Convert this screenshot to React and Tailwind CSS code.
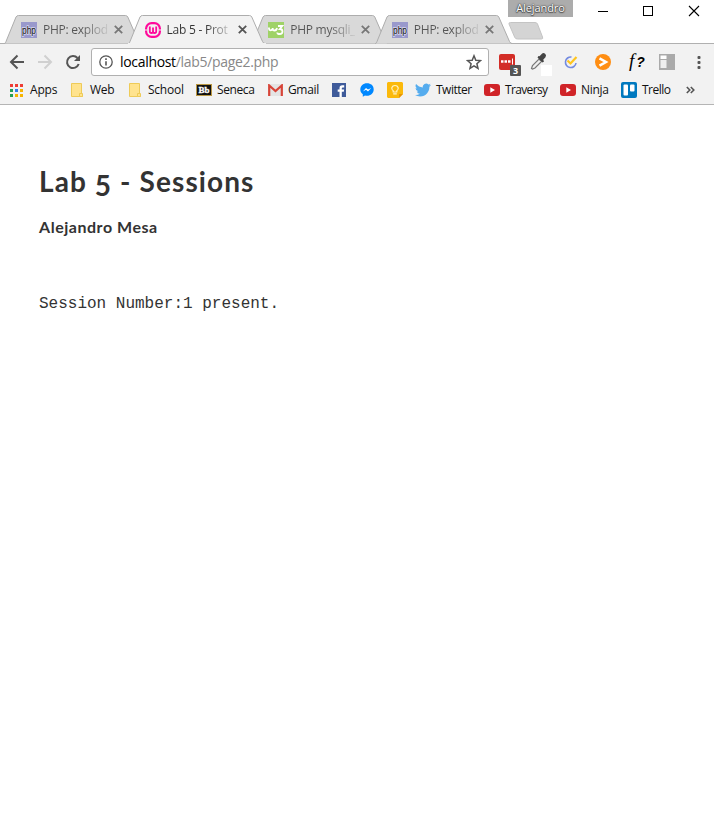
import React from 'react';

const UI = "font-['Open_Sans','Noto_Sans',sans-serif]";

function PhpIcon() {
  return (
    <svg width="16" height="16" className="block">
      <rect width="16" height="16" fill="#9999cc" />
      <text x="8" y="11.5" textAnchor="middle" fontFamily="Liberation Sans, sans-serif" fontSize="10" fill="#111" stroke="#d8d8ee" strokeWidth="1.6" paintOrder="stroke" textLength="14" lengthAdjust="spacingAndGlyphs">php</text>
    </svg>
  );
}

function WampIcon() {
  return (
    <svg width="16" height="16" viewBox="0 0 16 16" className="block" fill="none" stroke="#ff0a9b">
      <rect x="1.1" y="1.1" width="13.800" height="13.800" rx="5.500" strokeWidth="2.200" />
      <path d="M4.800 4.500v4.700q0 1.800 1.600 1.800T8 9.200V5.500M8 9.200q0 1.800 1.600 1.800t1.600-1.800V4.500" strokeWidth="1.800" />
      <path d="M0 8h2.500M13.500 8H16" stroke="#f2f2f2" strokeWidth="1" />
    </svg>
  );
}

function W3Icon() {
  return (
    <svg width="16" height="16" viewBox="0 0 16 16" className="block" fill="none" stroke="#fff" strokeWidth="1.8">
      <rect width="16" height="16" fill="#9fd267" stroke="none" />
      <path d="M1 5.500v1.300q0 1.500 1.500 1.500T4.700 7V6V7q0 1.500 1.900 1.500T9 6M10 4h4.200L11.800 7q2.700 0 2.700 2.500T11.800 12 9.500 10.500" />
    </svg>
  );
}

function Tab({ icon, label, active }) {
  const fill = active ? '#f2f2f2' : '#d9d9d9';
  return (
    <div className={'relative h-[29px] w-[138px] -mr-[14.400px] shrink-0 ' + (active ? 'z-10' : '')}>
      <svg width="138" height="29" className="absolute inset-0">
        <path d="M0 28.500C1.500 28.500 1.500 27.500 2 26.500L12 2Q12.800 .5 14.500 .5H121.500Q123 .5 123.800 2L134.500 26.500Q135.500 28.500 137 28.500" fill={fill} stroke="#adadad" />
        {active && <path d="M0 28.500H138" stroke="#f2f2f2" />}
      </svg>
      <div className="relative flex h-full items-center pl-[17px]">
        {icon}
        <span className={'ml-[6px] w-[65px] whitespace-nowrap text-[12px] leading-[16px] tracking-[-0.25px] bg-clip-text text-transparent bg-linear-to-r from-60% ' + (active ? 'from-[#333] to-[#33333320]' : 'from-[#555] to-[#55555520]')}>{label}</span>
        <svg width="9" height="9" className="ml-[6px]" stroke={active ? '#555' : '#777'} strokeWidth="1.800"><path d="M.8 .8l7.400 7.400M8.200 .8L.8 8.200" /></svg>
      </div>
    </div>
  );
}

function Folder() {
  return (
    <svg width="13" height="15" viewBox="0 0 13 15">
      <path d="M.5 .5h10v11h1v2H.5z" fill="#ffe38e" stroke="#eecb58" />
      <path d="M8.500 13.500v-3h3v3z" fill="#ffe38e" stroke="#eecb58" />
    </svg>
  );
}

function YouTube() {
  return (
    <svg width="16" height="12" viewBox="0 0 16 12">
      <rect width="16" height="12" rx="3" fill="#d02428" />
      <path d="M6.300 3.300v5.400L11 6z" fill="#fff" />
    </svg>
  );
}

function AppsIcon() {
  const colors = ['#ee3d35', '#ee3d35', '#ee3d35', '#249f58', '#2f80ed', '#f6b400', '#249f58', '#f6b400', '#f6b400'];
  return (
    <svg width="13" height="13">
      {colors.map((c, i) => <rect key={i} x={(i % 3) * 5} y={Math.floor(i / 3) * 5} width="3" height="3" fill={c} />)}
    </svg>
  );
}

function Bb() {
  return (
    <svg width="16" height="12">
      <rect x=".5" y=".5" width="15" height="11" fill="#111" stroke="#b99642" />
      <text x="8" y="9" textAnchor="middle" fontFamily="Liberation Serif, serif" fontWeight="bold" fontSize="9" fill="#fff" stroke="#fff" strokeWidth=".3">Bb</text>
    </svg>
  );
}

function Gmail() {
  return (
    <svg width="15" height="12" viewBox="0 0 15 12">
      <rect width="15" height="12" rx="1" fill="#e4e4e4" />
      <path d="M1.200 12V1.500L7.500 7l6.300-5.500V12" fill="none" stroke="#d84438" strokeWidth="2.200" />
    </svg>
  );
}

function Facebook() {
  return (
    <svg width="14" height="14" viewBox="0 0 14 14">
      <rect width="14" height="14" fill="#3f5b9a" />
      <path d="M7.500 14V8.700H5.700V6.500h1.800V5q0-2.800 2.800-2.800h1.900v2.200h-1.400q-1 0-1 .9v1.200h2.300l-.3 2.200h-2V14z" fill="#fff" />
    </svg>
  );
}

function Messenger() {
  return (
    <svg width="14" height="14" viewBox="0 0 14 14">
      <path d="M7 .3C3.200 .3 .3 3 .3 6.500c0 2 1 3.700 2.500 4.800v2.500L5 12.500c4.700 1.200 8.700-2 8.700-6S10.800 .3 7 .3" fill="#0088ff" />
      <path d="M2.800 8.400L6 5l2 1.600L11.200 5 8 8.400 6 6.800z" fill="#fff" />
    </svg>
  );
}

function Keep() {
  return (
    <svg width="16" height="16" viewBox="0 0 16 16">
      <path d="M1 0h14l1 1v11l-4 4H1l-1-1V1z" fill="#fbb90b" />
      <path d="M12 16v-4h4z" fill="#e69405" />
      <path d="M6.200 10V8.800C3.500 7 4.800 3.500 8 3.500s4.500 3.500 1.800 5.300V10zM6.200 11.800h3.600" fill="none" stroke="#fff3c7" strokeWidth="1.200" />
    </svg>
  );
}

function Twitter() {
  return (
    <svg width="16" height="16" viewBox="0 0 24 24" fill="#55acee">
      <path d="M23.950 4.570a10 10 0 0 1-2.820.77 4.960 4.960 0 0 0 2.160-2.720c-.95.550-2 .950-3.130 1.180a4.920 4.920 0 0 0-8.380 4.480C7.690 8.090 4.070 6.130 1.640 3.160a4.900 4.900 0 0 0 1.520 6.570 4.900 4.900 0 0 1-2.230-.61v.06a4.920 4.920 0 0 0 3.950 4.830 5 5 0 0 1-2.210.08 4.940 4.940 0 0 0 4.600 3.420A9.870 9.870 0 0 1 0 19.540a13.990 13.990 0 0 0 7.550 2.210c9.050 0 14-7.500 14-13.980v-.64a9.930 9.930 0 0 0 2.400-2.560z" />
    </svg>
  );
}

function Trello() {
  return (
    <svg width="16" height="16">
      <rect width="16" height="16" rx="2" fill="#0079bf" />
      <rect x="2.500" y="2.500" width="4.500" height="11" rx="1" fill="#fff" />
      <rect x="9" y="2.500" width="4.500" height="7" rx="1" fill="#fff" />
    </svg>
  );
}

/* Each slot's width runs up to the start of the next bookmark. */
const bookmarks = [
  { w: 'w-[61px]', gap: 'gap-[7px]', track: 'tracking-[-0.2px]', icon: <AppsIcon />, label: 'Apps' },
  { w: 'w-[58px]', gap: 'gap-[6px]', track: 'tracking-[-0.3px]', icon: <Folder />, label: 'Web' },
  { w: 'w-[67px]', gap: 'gap-[6px]', track: 'tracking-[-0.25px]', icon: <Folder />, label: 'School' },
  { w: 'w-[72px]', gap: 'gap-[5px]', track: 'tracking-[-0.4px]', icon: <Bb />, label: 'Seneca' },
  { w: 'w-[64px]', gap: 'gap-[5px]', track: 'tracking-[-0.35px]', icon: <Gmail />, label: 'Gmail' },
  { w: 'w-[28px]', icon: <Facebook /> },
  { w: 'w-[27px]', icon: <Messenger /> },
  { w: 'w-[28px]', icon: <Keep /> },
  { w: 'w-[69px]', gap: 'gap-[5px]', track: 'tracking-[-0.5px]', icon: <Twitter />, label: 'Twitter' },
  { w: 'w-[76px]', gap: 'gap-[5px]', track: 'tracking-[-0.65px]', icon: <YouTube />, label: 'Traversy' },
  { w: 'w-[61px]', gap: 'gap-[5px]', track: 'tracking-[-0.3px]', icon: <YouTube />, label: 'Ninja' },
  { w: 'w-[64px]', gap: 'gap-[5px]', track: 'tracking-[-0.5px]', icon: <Trello />, label: 'Trello' },
];

function Toolbar() {
  return (
    <div className="flex h-[36px] items-center pl-[9px]">
      <svg width="16" height="16" viewBox="0 0 16 16" fill="none" stroke="#555" strokeWidth="2"><path d="M15 8H2.500M8.500 1.500L2 8l6.500 6.500" /></svg>
      <svg width="16" height="16" viewBox="0 0 16 16" className="ml-[12px]" fill="none" stroke="#d0d0d0" strokeWidth="2"><path d="M1 8h12.500M7.500 1.500L14 8l-6.500 6.500" /></svg>
      <svg width="16" height="16" viewBox="0 0 16 16" className="ml-[12px]" fill="none" stroke="#555" strokeWidth="2"><path d="M13.700 10A6 6 0 1 1 12.500 4" /><path d="M15 1v6H9z" fill="#555" stroke="none" /></svg>
      <div className="ml-[10px] flex h-[28px] w-[398px] items-center rounded-[3px] border border-[#b0b0b0] bg-white pl-[7px]">
        <svg width="14" height="14" fill="none" stroke="#555" strokeWidth="1.300"><circle cx="7" cy="7" r="6.200" /><path d="M7 6.200v4.300M7 3.300v1.600" strokeWidth="1.600" /></svg>
        <span className="ml-[7px] w-[338px] whitespace-pre text-[14px] leading-[20px] tracking-[-0.32px] text-[#888]"><span className="text-black">localhost</span>/lab5/page2.php</span>
        <svg width="16" height="16" viewBox="0 0 16 16" className="ml-[8px]" fill="none" stroke="#555" strokeWidth="1.500"><path d="M8 1.800l1.800 4.400 4.700.4-3.600 3.100 1.100 4.600L8 11.800l-4 2.500 1.100-4.600-3.600-3.100 4.700-.4z" /></svg>
      </div>
      <svg width="24" height="24" viewBox="0 0 24 24" className="ml-[9px] mt-[4px]">
        <rect x="1" y="2" width="16" height="16" rx="2" fill="#d32d27" />
        <path d="M3 9.500h9.500" stroke="#fff" strokeWidth="2.400" strokeDasharray="2.500 1" /><path d="M14.500 6.500v6" stroke="#fff" />
        <rect x="12" y="13" width="11" height="11" rx="1" fill="#555" />
        <text x="17.500" y="22" textAnchor="middle" fontSize="9" fontFamily="Open Sans" fontWeight="bold" fill="#fff">3</text>
      </svg>
      <svg width="22" height="24" viewBox="0 0 22 24" className="ml-[8px] mt-[4px]">
        <path d="M1.500 16.500l1-3 6.500-6.500 2.500 2.500-6.500 6.500-2.500 1z" fill="#eee" stroke="#777" strokeWidth="1.200" />
        <path d="M7.500 5.500l5 5 1.500-1-.8-1.700 2.300-2.600q1.300-2-.4-3.400t-3.400.1L9.500 4.300 8.500 4z" fill="#444" />
        <rect x="11" y="13" width="11" height="11" fill="#fff" />
      </svg>
      <svg width="16" height="16" viewBox="0 0 16 16" className="ml-[11px]" fill="none" strokeWidth="1.600"><path d="M8.500 3A5.300 5.300 0 1 0 13 9" stroke="#738ae0" /><path d="M4.500 6.500l3 3L13.500 3" stroke="#ffc51e" strokeWidth="2.200" /></svg>
      <svg width="16" height="16" viewBox="0 0 16 16" className="ml-[16px]"><circle cx="8" cy="8" r="8" fill="#ff8e13" /><path d="M4.500 4.300L11 8l-6.500 3.700" fill="none" stroke="#fff" strokeWidth="2.500" /></svg>
      <span className="ml-[18px] -mt-[4px] w-[16px] whitespace-nowrap font-['Liberation_Serif',serif] text-[19px] leading-none font-medium italic text-black">f<span className="ml-[2px] font-['Liberation_Sans',sans-serif] text-[14px] font-bold">?</span></span>
      <svg width="16" height="16" className="ml-[14px]"><rect width="16" height="16" fill="#aaa" /><rect x="1.500" y="1.500" width="6" height="3.500" fill="#fff" /><rect x="1.500" y="6" width="6" height="8" fill="#eee" /></svg>
      <svg width="4" height="14" className="ml-[22px]" fill="#555"><rect x=".5" y="1" width="3" height="3" rx="1" /><rect x=".5" y="6" width="3" height="3" rx="1" /><rect x=".5" y="11" width="3" height="3" rx="1" /></svg>
    </div>
  );
}

export default function App() {
  return (
    <div className={'flex h-[837px] w-[714px] flex-col overflow-hidden bg-white ' + UI}>
      <header className="relative h-[44px] shrink-0 border-b border-[#b0b0b0]">
        <div className="flex h-[44px] items-end pl-[4px]">
          <Tab icon={<PhpIcon />} label="PHP: explod" />
          <Tab icon={<WampIcon />} label="Lab 5 - Prot" active />
          <Tab icon={<W3Icon />} label="PHP mysqli_" />
          <Tab icon={<PhpIcon />} label="PHP: explod" />
          <svg width="36" height="18" className="mb-[4px] ml-[10px] shrink-0"><path d="M2.500 .5H27q2 0 2.500 1.500l5 13q.8 2-1 2H9.500q-2 0-2.700-1.500L1 2Q.5 .5 2.500 .5" fill="#d4d4d4" stroke="#c4c4c4" /></svg>
        </div>
        <div className="absolute top-0 right-0 flex h-[22px] w-[206px] items-start">
          <span className="h-[17px] w-[65px] bg-[#acacac] text-center text-[11px] leading-[15px] tracking-[-0.1px] text-white [text-shadow:0_0_2px_#333,0_0_1px_#333,0_1px_1px_#555]">Alejandro</span>
          <svg width="141" height="22" fill="none" stroke="#000"><path d="M25 11.500h10M116 6l10 10M126 6l-10 10" strokeWidth="1.100" /><rect x="70.500" y="6.500" width="9" height="9" /></svg>
        </div>
      </header>
      <div className="h-[61px] shrink-0 border-b border-[#b5b5b5] bg-[#f2f2f2]">
        <Toolbar />
        <div className="flex h-[20px] items-center pl-[10px]">
          {bookmarks.map((b, i) => (
            <div key={i} className={'flex h-[20px] shrink-0 items-center ' + b.w + ' ' + (b.gap || '')}>
              <span className="shrink-0">{b.icon}</span>
              {b.label && <span className={'whitespace-nowrap text-[12px] leading-[16px] text-[#111] ' + b.track}>{b.label}</span>}
            </div>
          ))}
          <svg width="9" height="8" className="ml-px" fill="none" stroke="#555" strokeWidth="1.600"><path d="M.8 1l3 3-3 3M4.800 1l3 3-3 3" /></svg>
        </div>
      </div>
      <main className="px-[39px] pt-[58px] text-[#333]">
        <h1 className="font-['Lato',sans-serif] text-[28px] leading-[36px] font-bold whitespace-nowrap tracking-[1.1px]">Lab <span className="relative top-[4px]">5</span> - Sessions</h1>
        <h2 className="mt-[16px] font-['Lato',sans-serif] text-[16px] leading-[24px] font-bold whitespace-nowrap tracking-[0.53px]">Alejandro Mesa</h2>
        <p className="mt-[53px] font-['Liberation_Mono',monospace] text-[16px] leading-[24px] whitespace-nowrap">Session Number:1 present.</p>
      </main>
    </div>
  );
}
